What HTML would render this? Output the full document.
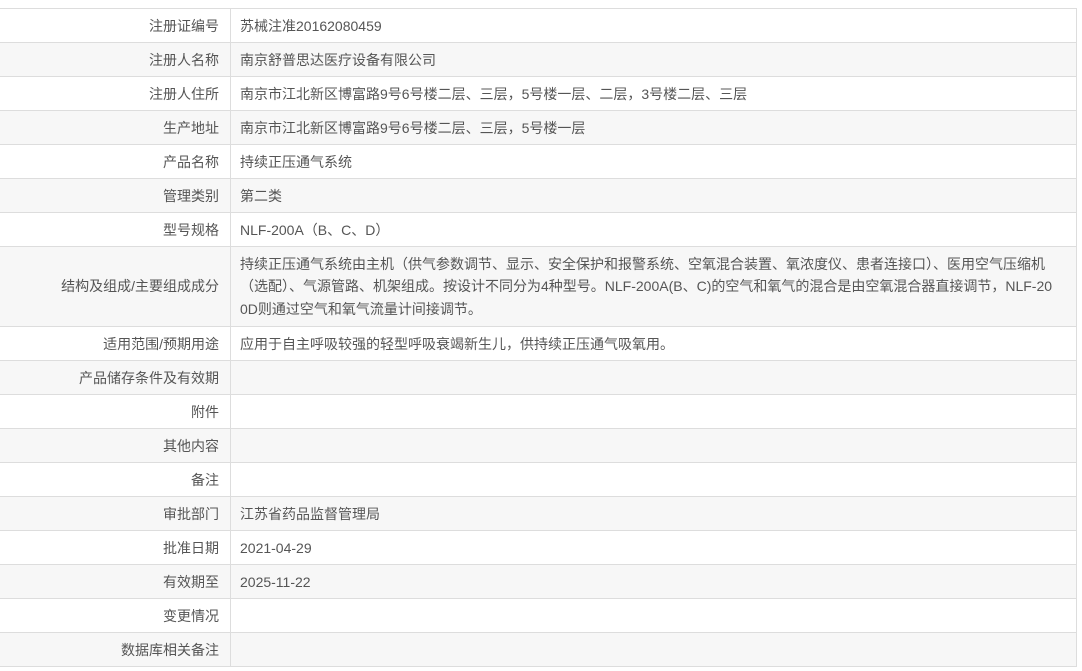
<!DOCTYPE html>
<html><head><meta charset="utf-8">
<style>
html,body{margin:0;padding:0;background:#fff;}
body{width:1082px;height:671px;overflow:hidden;font-family:"Liberation Sans","Noto Sans CJK SC",sans-serif;font-size:14px;color:#555;}
table{position:absolute;top:8px;left:0;width:1077px;border-collapse:collapse;table-layout:fixed;}
td{border-top:1px solid #ddd;border-bottom:1px solid #ddd;height:33px;padding:0;white-space:nowrap;overflow:hidden;}
td.l{width:219px;text-align:right;padding-right:11px;border-right:1px solid #ddd;}
td.v{padding-left:9px;border-right:1px solid #ddd;}
tr:nth-child(even) td{background:#f7f7f7;}
td.m{line-height:22.5px;height:79px;}
</style></head><body>
<table>
<tr><td class="l">注册证编号</td><td class="v">苏械注准20162080459</td></tr>
<tr><td class="l">注册人名称</td><td class="v">南京舒普思达医疗设备有限公司</td></tr>
<tr><td class="l">注册人住所</td><td class="v">南京市江北新区博富路9号6号楼二层、三层，5号楼一层、二层，3号楼二层、三层</td></tr>
<tr><td class="l">生产地址</td><td class="v">南京市江北新区博富路9号6号楼二层、三层，5号楼一层</td></tr>
<tr><td class="l">产品名称</td><td class="v">持续正压通气系统</td></tr>
<tr><td class="l">管理类别</td><td class="v">第二类</td></tr>
<tr><td class="l">型号规格</td><td class="v">NLF-200A（B、C、D）</td></tr>
<tr><td class="l m">结构及组成/主要组成成分</td><td class="v m">持续正压通气系统由主机（供气参数调节、显示、安全保护和报警系统、空氧混合装置、氧浓度仪、患者连接口）、医用空气压缩机<br>（选配）、气源管路、机架组成。按设计不同分为4种型号。NLF-200A(B、C)的空气和氧气的混合是由空氧混合器直接调节，NLF-20<br>0D则通过空气和氧气流量计间接调节。</td></tr>
<tr><td class="l">适用范围/预期用途</td><td class="v">应用于自主呼吸较强的轻型呼吸衰竭新生儿，供持续正压通气吸氧用。</td></tr>
<tr><td class="l">产品储存条件及有效期</td><td class="v"></td></tr>
<tr><td class="l">附件</td><td class="v"></td></tr>
<tr><td class="l">其他内容</td><td class="v"></td></tr>
<tr><td class="l">备注</td><td class="v"></td></tr>
<tr><td class="l">审批部门</td><td class="v">江苏省药品监督管理局</td></tr>
<tr><td class="l">批准日期</td><td class="v">2021-04-29</td></tr>
<tr><td class="l">有效期至</td><td class="v">2025-11-22</td></tr>
<tr><td class="l">变更情况</td><td class="v"></td></tr>
<tr><td class="l">数据库相关备注</td><td class="v"></td></tr>
</table>
</body></html>
